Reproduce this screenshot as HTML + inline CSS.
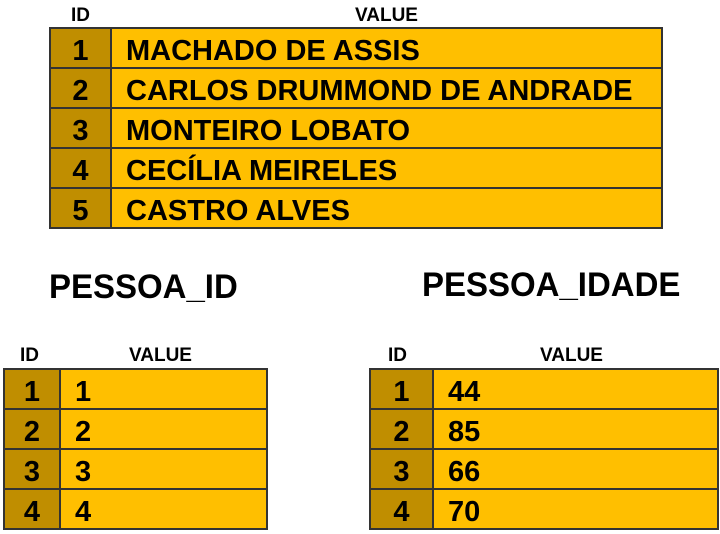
<!DOCTYPE html>
<html><head><style>
body{margin:0;width:720px;height:500px;background:#fff;position:relative;overflow:hidden;font-family:"Liberation Sans",sans-serif;font-weight:bold;color:#000}
.t{position:absolute;border:2px solid #333;border-bottom:none;box-sizing:border-box}
.r{display:flex;height:40px;border-bottom:2px solid #333;box-sizing:border-box}
.r .i{background:#c08e00;border-right:2px solid #333;box-sizing:border-box;text-align:center;font-size:29px;line-height:44px}
.r .v{background:#ffbf00;flex:1;font-size:29px;line-height:44px;padding-left:14px}
.h{position:absolute;font-size:19px;line-height:20px}
.ti{position:absolute;font-size:34px;line-height:40px;transform:scaleX(0.97);transform-origin:left}
</style></head><body>
<div class="h" style="left:71px;top:6px">ID</div>
<div class="h" style="left:355px;top:6px">VALUE</div>
<div class="t" style="left:49px;top:27px;width:614px">
<div class="r"><div class="i" style="width:61px">1</div><div class="v">MACHADO DE ASSIS</div></div>
<div class="r"><div class="i" style="width:61px">2</div><div class="v">CARLOS DRUMMOND DE ANDRADE</div></div>
<div class="r"><div class="i" style="width:61px">3</div><div class="v">MONTEIRO LOBATO</div></div>
<div class="r"><div class="i" style="width:61px">4</div><div class="v">CECÍLIA MEIRELES</div></div>
<div class="r"><div class="i" style="width:61px">5</div><div class="v">CASTRO ALVES</div></div>
</div>
<div class="ti" style="left:49px;top:267px">PESSOA_ID</div>
<div class="ti" style="left:422px;top:265px">PESSOA_IDADE</div>
<div class="h" style="left:20px;top:346px">ID</div>
<div class="h" style="left:129px;top:346px">VALUE</div>
<div class="h" style="left:388px;top:346px">ID</div>
<div class="h" style="left:540px;top:346px">VALUE</div>
<div class="t" style="left:3px;top:368px;width:265px">
<div class="r"><div class="i" style="width:56px">1</div><div class="v">1</div></div>
<div class="r"><div class="i" style="width:56px">2</div><div class="v">2</div></div>
<div class="r"><div class="i" style="width:56px">3</div><div class="v">3</div></div>
<div class="r"><div class="i" style="width:56px">4</div><div class="v">4</div></div>
</div>
<div class="t" style="left:369px;top:368px;width:350px">
<div class="r"><div class="i" style="width:63px">1</div><div class="v">44</div></div>
<div class="r"><div class="i" style="width:63px">2</div><div class="v">85</div></div>
<div class="r"><div class="i" style="width:63px">3</div><div class="v">66</div></div>
<div class="r"><div class="i" style="width:63px">4</div><div class="v">70</div></div>
</div>
</body></html>
